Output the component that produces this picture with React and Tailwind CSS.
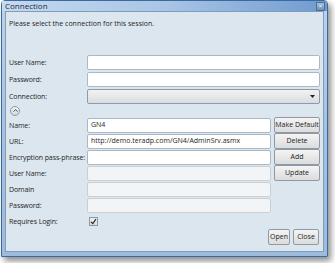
import React from "react";

function Label({ children }) {
  return <div className="w-[78px] shrink-0 leading-none whitespace-nowrap tracking-[-0.1px]">{children}</div>;
}

function Field({ value, disabled, wide }) {
  return (
    <div
      className={`h-[15px] flex items-center px-[3px] border rounded-[2px] ${
        wide ? "w-[237px]" : "w-[184px]"
      } ${disabled ? "bg-[#f3f4f5] border-[#c9d0d6]" : "bg-white border-[#abb9c7]"}`}
    >
      {value}
    </div>
  );
}

function Btn({ children, w = "w-[46px]" }) {
  return (
    <div
      className={`${w} h-[16px] flex items-center justify-center rounded-[2px] border border-[#8e9aa6] bg-gradient-to-b from-[#f4f4f4] to-[#dcdcdc] text-[#222]`}
    >
      {children}
    </div>
  );
}

function Row({ label, children, btn }) {
  return (
    <div className="flex items-center h-[16px]">
      <Label>{label}</Label>
      {children}
      {btn && <div className="ml-[3px]">{btn}</div>}
    </div>
  );
}

export default function App() {
  return (
    <div
      className="w-[335px] h-[263px] bg-white relative overflow-hidden text-[#1e1e1e]"
      style={{ fontFamily: '"Open Sans", "Noto Sans", sans-serif' }}
    >
      <div className="absolute left-[1px] top-0 w-[327px] h-[257px] shadow-[3px_4px_6px_rgba(0,0,0,0.45)] rounded-t-[4px] border border-[#3c6a9e] bg-gradient-to-b from-[#bcd3ec] via-[#a6c2e2] to-[#9dbbdd] flex flex-col">
        {/* title bar */}
        <div className="h-[14px] flex items-center justify-between pl-[3px] pr-[2px] bg-gradient-to-r from-[#c5d9ef] via-[#a9c5e6] to-[#6f9bd0]">
          <span className="text-[8px] text-[#1b2a3c] leading-none">Connection</span>
          <div className="w-[9px] h-[9px] border border-[#4f6f94] bg-gradient-to-b from-[#a9c0dc] to-[#6e8fb7] flex items-center justify-center text-[6px] leading-none text-white">
            ×
          </div>
        </div>
        {/* client */}
        <div className="flex-1 mx-[3px] mb-[4px] border border-[#7f9db9] bg-[#dce6ef] text-[7px] flex flex-col px-[3px]">
          <div className="mt-[8px] mb-[27px] leading-none">Please select the connection for this session.</div>
          <div className="flex flex-col gap-[1px]">
            <Row label="User Name:"><Field wide /></Row>
            <Row label="Password:"><Field wide /></Row>
            <Row label="Connection:">
              <div className="w-[237px] h-[15px] border border-[#8d9aa8] rounded-[2px] bg-gradient-to-b from-[#f2f2f2] to-[#d9dde1] flex items-center justify-end pr-[4px]">
                <svg width="5" height="3" viewBox="0 0 5 3"><path d="M0 0h5L2.5 3z" fill="#222" /></svg>
              </div>
            </Row>
          </div>
          <div className="h-[13px] flex items-center pl-[1px]">
            <div className="w-[10px] h-[10px] rounded-full border border-[#8a99a8] bg-gradient-to-b from-[#f3f3f3] to-[#d5d9dd] flex items-center justify-center">
              <svg width="5" height="3" viewBox="0 0 5 3"><path d="M0.5 2.6L2.5 0.6L4.5 2.6" stroke="#333" strokeWidth="0.9" fill="none" /></svg>
            </div>
          </div>
          <div className="flex flex-col">
            <Row label="Name:" btn={<Btn>Make Default</Btn>}><Field value="GN4" /></Row>
            <Row label="URL:" btn={<Btn>Delete</Btn>}><Field value="http://demo.teradp.com/GN4/AdminSrv.asmx" /></Row>
            <Row label="Encryption pass-phrase:" btn={<Btn>Add</Btn>}><Field /></Row>
            <Row label="User Name:" btn={<Btn>Update</Btn>}><Field disabled /></Row>
            <Row label="Domain"><Field disabled /></Row>
            <Row label="Password:"><Field disabled /></Row>
            <Row label="Requires Login:">
              <div className="ml-[2px] w-[9px] h-[9px] border border-[#8a99a8] bg-gradient-to-b from-[#eef0f2] to-[#d8dde2] flex items-center justify-center">
                <svg width="7" height="7" viewBox="0 0 7 7"><path d="M1 3.8L2.8 5.6L6 1" stroke="#222" strokeWidth="1.2" fill="none" /></svg>
              </div>
            </Row>
          </div>
          <div className="flex-1" />
          <div className="flex justify-end gap-[3px] mb-[6px] mr-[1px]">
            <Btn w="w-[22px]">Open</Btn>
            <Btn w="w-[26px]">Close</Btn>
          </div>
        </div>
      </div>
    </div>
  );
}
